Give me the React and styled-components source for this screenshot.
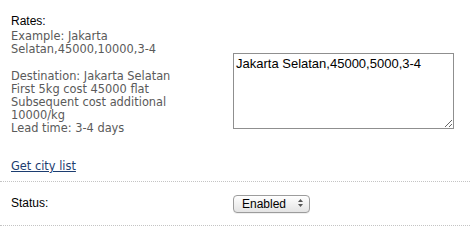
import React from "react";
import styled, { createGlobalStyle } from "styled-components";

const Global = createGlobalStyle`
  html, body { margin: 0; padding: 0; background: #fff; }
  body { font-family: "Liberation Sans", Arial, sans-serif; }
`;

const Form = styled.div`
  width: 470px;
  padding-top: 14px;
`;

const FieldRow = styled.div`
  display: grid;
  grid-template-columns: 233px 1fr;
  align-items: ${(p) => (p.$center ? "center" : "start")};
  padding: ${(p) => p.$pad || "0"};
  border-bottom: 1px dotted #c4c4c4;
`;

const LabelCell = styled.div`
  padding-left: 11px;
  padding-right: 12px;
`;

const Label = styled.div`
  font-family: "Liberation Sans", Arial, sans-serif;
  font-size: 12px;
  line-height: 14px;
  color: #000;
`;

const Hint = styled.div`
  font-family: "DejaVu Sans", Verdana, sans-serif;
  font-size: 11.4px;
  line-height: 13px;
  color: #5a5a5a;
  margin-top: ${(p) => p.$top || "0"};
`;

const CityLink = styled.a`
  display: inline-block;
  font-family: "DejaVu Sans", Verdana, sans-serif;
  font-size: 11.4px;
  line-height: 13px;
  color: #1c3d70;
  text-decoration: underline;
  margin-top: 25px;
  margin-bottom: 8px;
`;

const RatesArea = styled.textarea`
  display: block;
  box-sizing: border-box;
  width: 221px;
  height: 76px;
  margin-top: 39px;
  padding: 2px 2px;
  border: 1px solid #8f8f8f;
  font-family: "Liberation Sans", Arial, sans-serif;
  font-size: 13px;
  line-height: 15px;
  color: #000;
  background: #fff;
  outline: none;
`;

const SelectWrap = styled.div`
  position: relative;
  width: 77px;
  height: 18px;
`;

const Select = styled.select`
  appearance: none;
  -webkit-appearance: none;
  box-sizing: border-box;
  width: 77px;
  height: 18px;
  padding: 0 0 0 8px;
  border: 1px solid #9c9c9c;
  border-radius: 4px;
  background: linear-gradient(#ffffff, #f1f1f1 50%, #e4e4e4);
  font-family: "Liberation Sans", Arial, sans-serif;
  font-size: 12px;
  color: #000;
  outline: none;
  box-shadow: 0 1px 0 rgba(0, 0, 0, 0.06);
`;

const Arrows = styled.svg`
  position: absolute;
  right: 7px;
  top: 5px;
  pointer-events: none;
`;

export default function App() {
  return (
    <>
      <Global />
      <Form>
        <FieldRow>
          <LabelCell>
            <Label>Rates:</Label>
            <Hint $top="2px">
              Example: Jakarta
              <br />
              Selatan,45000,10000,3-4
            </Hint>
            <Hint $top="14px">
              Destination: Jakarta Selatan
              <br />
              First 5kg cost 45000 flat
              <br />
              Subsequent cost additional
              <br />
              10000/kg
              <br />
              Lead time: 3-4 days
            </Hint>
            <CityLink href="#">Get city list</CityLink>
          </LabelCell>
          <div>
            <RatesArea defaultValue="Jakarta Selatan,45000,5000,3-4" />
          </div>
        </FieldRow>
        <FieldRow $center $pad="12px 0 13px 0">
          <LabelCell>
            <Label>Status:</Label>
          </LabelCell>
          <SelectWrap>
            <Select defaultValue="1">
              <option value="1">Enabled</option>
              <option value="0">Disabled</option>
            </Select>
            <Arrows width="5" height="8" viewBox="0 0 5 8">
              <path d="M2.5 0 L5 3 L0 3 Z" fill="#555" />
              <path d="M0 5 L5 5 L2.5 8 Z" fill="#555" />
            </Arrows>
          </SelectWrap>
        </FieldRow>
      </Form>
    </>
  );
}
